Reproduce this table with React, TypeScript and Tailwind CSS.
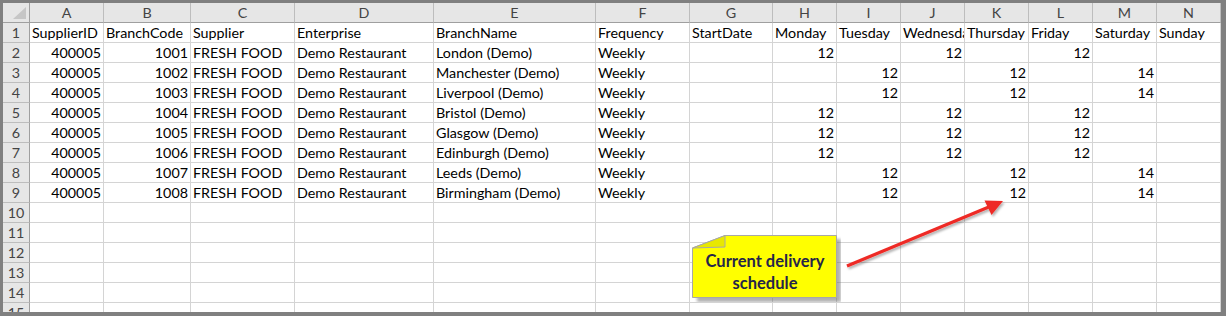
const cols = ["A", "B", "C", "D", "E", "F", "G", "H", "I", "J", "K", "L", "M", "N"];

const widths = [
  "w-[74px]",
  "w-[87px]",
  "w-[104px]",
  "w-[139px]",
  "w-[162px]",
  "w-[94px]",
  "w-[83px]",
  "w-[64px]",
  "w-[64px]",
  "w-[64px]",
  "w-[64px]",
  "w-[64px]",
  "w-[64px]",
  "w-[64px]",
];

const titles = [
  "SupplierID",
  "BranchCode",
  "Supplier",
  "Enterprise",
  "BranchName",
  "Frequency",
  "StartDate",
  "Monday",
  "Tuesday",
  "Wednesday",
  "Thursday",
  "Friday",
  "Saturday",
  "Sunday",
];

type Branch = { code: number; name: string; days: (number | null)[] };

const branches: Branch[] = [
  { code: 1001, name: "London (Demo)", days: [12, null, 12, null, 12, null, null] },
  { code: 1002, name: "Manchester (Demo)", days: [null, 12, null, 12, null, 14, null] },
  { code: 1003, name: "Liverpool (Demo)", days: [null, 12, null, 12, null, 14, null] },
  { code: 1004, name: "Bristol (Demo)", days: [12, null, 12, null, 12, null, null] },
  { code: 1005, name: "Glasgow (Demo)", days: [12, null, 12, null, 12, null, null] },
  { code: 1006, name: "Edinburgh (Demo)", days: [12, null, 12, null, 12, null, null] },
  { code: 1007, name: "Leeds (Demo)", days: [null, 12, null, 12, null, 14, null] },
  { code: 1008, name: "Birmingham (Demo)", days: [null, 12, null, 12, null, 14, null] },
];

type Cell = { v: string; right?: boolean };

const rows: Cell[][] = [
  titles.map((t) => ({ v: t })),
  ...branches.map((b) => [
    { v: "400005", right: true },
    { v: String(b.code), right: true },
    { v: "FRESH FOOD" },
    { v: "Demo Restaurant" },
    { v: b.name },
    { v: "Weekly" },
    { v: "" },
    ...b.days.map((d) => ({ v: d === null ? "" : String(d), right: true })),
  ]),
];

while (rows.length < 15) rows.push(cols.map(() => ({ v: "" })));

function Corner() {
  return (
    <div className="w-[27px] h-[20px] shrink-0 bg-[#e6e6e6] border-r border-b border-[#9f9f9f] flex items-end justify-end pr-[3px] pb-[3px]">
      <svg width="13" height="12" viewBox="0 0 13 12">
        <polygon points="13,0 13,12 0,12" fill="#c6c6c6" />
      </svg>
    </div>
  );
}

function Callout() {
  return (
    <div className="absolute left-[689px] top-[232px] w-[152px] h-[70px]">
      <svg width="152" height="70" viewBox="0 0 152 70" className="absolute inset-0">
        <defs>
          <filter id="soft" x="-10%" y="-10%" width="130%" height="140%">
            <feGaussianBlur stdDeviation="1.6" />
          </filter>
        </defs>
        <polygon points="40,7 152,7 152,70 8,70 8,20" fill="#6f6f6f" opacity="0.55" filter="url(#soft)" />
        <polygon points="36,3.5 147.5,3.5 147.5,65.5 3.5,65.5 3.5,16" fill="#ffff00" stroke="#a8a8a8" strokeWidth="1" />
        <polygon points="36,3.5 36,15 3.5,16" fill="#e8e800" stroke="#a8a8a8" strokeWidth="1" />
      </svg>
      <div className="absolute left-[4px] top-[18px] w-[144px] text-center font-['Lato',sans-serif] font-bold text-[16.5px] leading-[22px] text-[#25254a]">
        Current delivery
        <br />
        schedule
      </div>
    </div>
  );
}

function Arrow() {
  return (
    <svg className="absolute left-0 top-0" width="1226" height="316" viewBox="0 0 1226 316">
      <defs>
        <filter id="arrowShade" x="-10%" y="-30%" width="120%" height="160%">
          <feDropShadow dx="1.5" dy="2" stdDeviation="1.2" floodColor="#000" floodOpacity="0.3" />
        </filter>
      </defs>
      <g filter="url(#arrowShade)">
        <line x1="847" y1="266" x2="990" y2="206.5" stroke="#ee2b25" strokeWidth="3.2" />
        <polygon points="1003,201 984.5,200.5 991.5,215" fill="#ee2b25" />
      </g>
    </svg>
  );
}

export default function App() {
  return (
    <div className="relative w-[1226px] h-[316px] bg-[#808080] pt-[3px] pl-[3px] overflow-hidden">
      <div className="w-[1218px] h-[309px] bg-white overflow-hidden font-['Lato',sans-serif] text-[14.3px] text-black">
        <div className="flex">
          <Corner />
          {cols.map((c, i) => (
            <div
              key={c}
              className={`${widths[i]} h-[20px] shrink-0 bg-[#e6e6e6] border-r border-r-[#bdbdbd] border-b border-b-[#9f9f9f] text-center leading-[19px] text-[#444]`}
            >
              {c}
            </div>
          ))}
        </div>
        {rows.map((row, r) => (
          <div key={r} className="flex">
            <div className="w-[27px] h-[20px] shrink-0 bg-[#e6e6e6] border-r border-r-[#9f9f9f] border-b border-b-[#bdbdbd] text-center leading-[19px] text-[#444]">
              {r + 1}
            </div>
            {row.map((cell, i) => (
              <div
                key={i}
                className={`${widths[i]} h-[20px] shrink-0 border-r border-b border-[#d4d4d4] leading-[19px] whitespace-nowrap overflow-hidden ${
                  cell.right ? "text-right pr-[2px]" : "pl-[2px]"
                }`}
              >
                {cell.v}
              </div>
            ))}
          </div>
        ))}
      </div>
      <Arrow />
      <Callout />
    </div>
  );
}
